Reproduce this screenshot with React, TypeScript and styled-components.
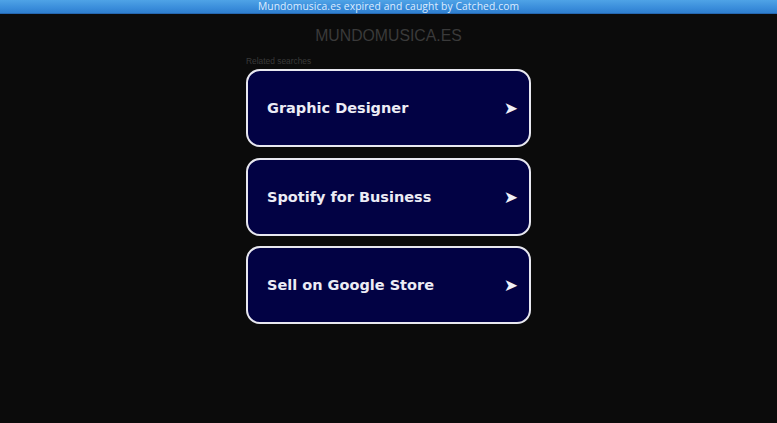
import React from "react";
import styled, { createGlobalStyle } from "styled-components";

const Global = createGlobalStyle`
  html, body { margin: 0; padding: 0; background: #0b0b0b; }
  body { font-family: "Liberation Sans", Arial, sans-serif; }
`;

const Page = styled.div`
  min-height: 423px;
  background: #0b0b0b;
`;

const TopBar = styled.div`
  height: 13px;
  background: linear-gradient(to bottom, #4fa3e6 0%, #3a8ddb 60%, #2f7fcf 100%);
  border-bottom: 1px solid #2567b0;
  color: #dcecff;
  font-family: "Open Sans", "Noto Sans", sans-serif;
  font-size: 10.3px;
  line-height: 13px;
  text-align: center;
  letter-spacing: 0.1px;
  white-space: nowrap;
`;

const Main = styled.div`
  width: 285px;
  margin: 0 auto;
  display: flex;
  flex-direction: column;
`;

const Title = styled.div`
  margin-top: 12px;
  text-align: center;
  color: #3a3a3a;
  font-size: 15.8px;
  line-height: 20px;
`;

const Related = styled.div`
  margin-top: 10px;
  color: #3a3a3a;
  font-size: 8.4px;
  line-height: 10px;
`;

const List = styled.div`
  margin-top: 3px;
  display: flex;
  flex-direction: column;
  gap: 10.5px;
`;

const Card = styled.a`
  box-sizing: border-box;
  height: 78px;
  border: 2px solid #e8e8f0;
  border-radius: 14px;
  background: #020244;
  display: flex;
  align-items: center;
  justify-content: space-between;
  padding: 0 11px 0 19px;
  color: #ececf5;
  text-decoration: none;
  font-family: "DejaVu Sans", Verdana, sans-serif;
  font-weight: bold;
  font-size: 14.5px;
  letter-spacing: 0;
`;

const Arrow = styled.span`
  font-size: 17px;
  color: #f0f0f8;
`;

const items = ["Graphic Designer", "Spotify for Business", "Sell on Google Store"];

export default function App() {
  return (
    <Page>
      <Global />
      <TopBar>Mundomusica.es expired and caught by Catched.com</TopBar>
      <Main>
        <Title>MUNDOMUSICA.ES</Title>
        <Related>Related searches</Related>
        <List>
          {items.map((t) => (
            <Card key={t} href="#">
              <span>{t}</span>
              <Arrow>➤</Arrow>
            </Card>
          ))}
        </List>
      </Main>
    </Page>
  );
}
